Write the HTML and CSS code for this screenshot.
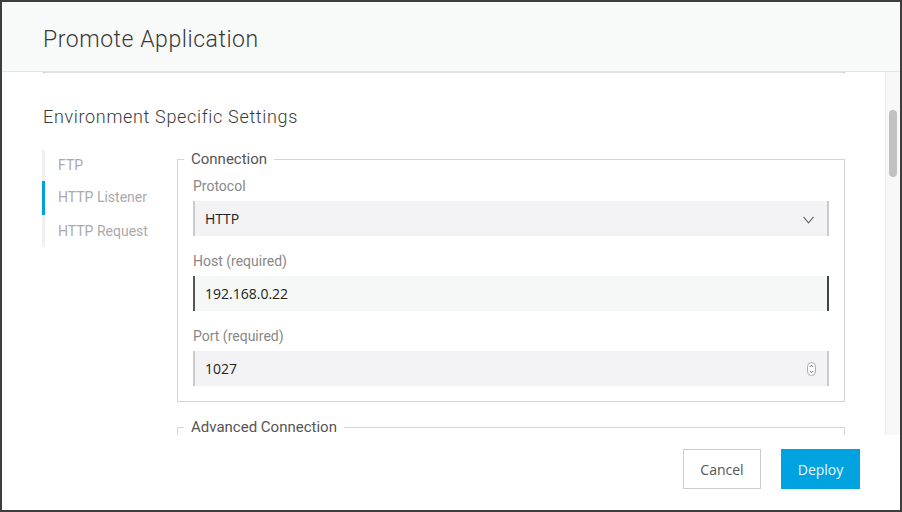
FILE: index.html
```html
<!DOCTYPE html>
<html>
<head>
<meta charset="utf-8">
<link rel="stylesheet" href="styles.css">
</head>
<body>
<div class="window">
  <header class="header">
    <h1 class="title">Promote Application</h1>
  </header>
  <div class="body">
    <div class="content">
      <div class="prev-edge"></div>
      <h2 class="section-title">Environment Specific Settings</h2>
      <div class="settings">
        <nav class="nav">
          <div class="nav-item">FTP</div>
          <div class="nav-item active">HTTP Listener</div>
          <div class="nav-item">HTTP Request</div>
        </nav>
        <div class="forms">
          <fieldset class="group">
            <legend class="legend">Connection</legend>
            <div class="field">
              <div class="label">Protocol</div>
              <div class="input select">
                <span class="value">HTTP</span>
                <svg class="chevron" width="11" height="8" viewBox="0 0 11 8"><path d="M0.5 0.8 L5.5 6.8 L10.5 0.8" fill="none" stroke="#666" stroke-width="1.1"/></svg>
              </div>
            </div>
            <div class="field">
              <div class="label">Host (required)</div>
              <div class="input focused"><span class="value">192.168.0.22</span></div>
            </div>
            <div class="field">
              <div class="label">Port (required)</div>
              <div class="input">
                <span class="value">1027</span>
                <svg class="spinner" width="9" height="14" viewBox="0 0 9 14"><rect x="0.5" y="0.5" width="8" height="13" rx="4" fill="#fff" stroke="#aaa"/><path d="M2.8 5 L4.5 3.3 L6.2 5" fill="none" stroke="#555" stroke-width="0.9"/><path d="M2.8 9 L4.5 10.7 L6.2 9" fill="none" stroke="#555" stroke-width="0.9"/></svg>
              </div>
            </div>
          </fieldset>
          <fieldset class="group group-advanced">
            <legend class="legend">Advanced Connection</legend>
          </fieldset>
        </div>
      </div>
    </div>
    <div class="scrollbar"><div class="thumb"></div></div>
  </div>
  <footer class="footer">
    <button class="btn btn-cancel">Cancel</button>
    <button class="btn btn-primary">Deploy</button>
  </footer>
</div>
</body>
</html>
```
FILE: styles.css
```css
html, body {
  margin: 0;
  padding: 0;
  width: 902px;
  height: 512px;
  overflow: hidden;
  background: #fff;
}
.window {
  box-sizing: border-box;
  width: 902px;
  height: 512px;
  border: 2px solid #3d3d3d;
  display: flex;
  flex-direction: column;
  background: #fff;
  font-family: Roboto, "Liberation Sans", sans-serif;
}
.header {
  height: 69px;
  flex: none;
  background: #f8f9f9;
  border-bottom: 1px solid #e4e6e6;
  padding-left: 41px;
  display: flex;
  align-items: center;
}
.title {
  margin: 5px 0 0;
  font-size: 23px;
  font-weight: 300;
  color: #3a3a3a;
  letter-spacing: 0.55px;
}
.body {
  height: 363px;
  flex: none;
  display: flex;
}
.content {
  flex: 1;
  overflow: hidden;
  padding: 0 40px 0 41px;
}
.prev-edge {
  height: 1px;
  background: #e2e2e2;
  border-left: 2px solid #c8c8c8;
  border-right: 2px solid #c8c8c8;
}
.section-title {
  margin: 32px 0 0;
  font-size: 18px;
  line-height: 24px;
  font-weight: 300;
  color: #3a3a3a;
  letter-spacing: 0.67px;
}
.settings {
  display: flex;
  margin-top: 20px;
}
.nav {
  width: 132px;
  flex: none;
  align-self: flex-start;
  border-left: 3px solid #f0f0f0;
  margin-left: -1px;
  margin-top: 1px;
}
.nav-item {
  height: 32px;
  line-height: 32px;
  padding-left: 13px;
  font-size: 14px;
  color: #aaa;
  margin-left: -3px;
  border-left: 3px solid transparent;
}
.nav-item:first-child {
  line-height: 31px;
  height: 31px;
}
.nav-item.active {
  border-left-color: #00a0df;
  height: 34px;
  line-height: 33px;
}
.nav-item:last-child {
  line-height: 32px;
}
.forms {
  flex: 1;
  display: flex;
  flex-direction: column;
  gap: 15px;
}
.group {
  margin: 0;
  border: 1px solid #d4d4d4;
  padding: 7px 15px 15px;
  min-width: 0;
}
.group-advanced {
  height: 60px;
  box-sizing: border-box;
}
.legend {
  padding: 0 7px;
  margin-left: -9px;
  font-size: 15px;
  line-height: 20px;
  color: #555;
}
.field + .field {
  margin-top: 15px;
}
.label {
  font-size: 14px;
  line-height: 20px;
  color: #888;
  margin-bottom: 5px;
}
.input {
  height: 35px;
  box-sizing: border-box;
  background: #f3f3f5;
  border-left: 2px solid #cacaca;
  border-right: 2px solid #cacaca;
  display: flex;
  align-items: center;
  padding: 0 12px 0 10px;
}
.input.focused {
  background: #f6f8f8;
  border-left-color: #555;
  border-right-color: #444;
}
.value {
  flex: 1;
  font-family: "Open Sans", "Liberation Sans", sans-serif;
  font-size: 14px;
  color: #222;
}
.chevron {
  margin-right: 1px;
  margin-top: 2px;
}
.spinner {
  margin-right: -1px;
}
.scrollbar {
  width: 14px;
  flex: none;
  background: #f8f8f8;
  border-left: 1px solid #ebebeb;
  position: relative;
}
.thumb {
  position: absolute;
  left: 3px;
  top: 38px;
  width: 8px;
  height: 67px;
  border-radius: 4px;
  background: #c1c1c1;
}
.footer {
  flex: 1;
  display: flex;
  justify-content: flex-end;
  align-items: flex-start;
  gap: 20px;
  padding: 14px 40px 0 0;
}
.btn {
  height: 40px;
  box-sizing: border-box;
  font-family: "Open Sans", "Liberation Sans", sans-serif;
  font-size: 14px;
  padding: 0;
  cursor: pointer;
}
.btn-cancel {
  width: 78px;
  background: #fff;
  border: 1px solid #ccc;
  color: #555;
}
.btn-primary {
  width: 79px;
  background: #00a3e0;
  border: none;
  color: #eef8fd;
}
```
